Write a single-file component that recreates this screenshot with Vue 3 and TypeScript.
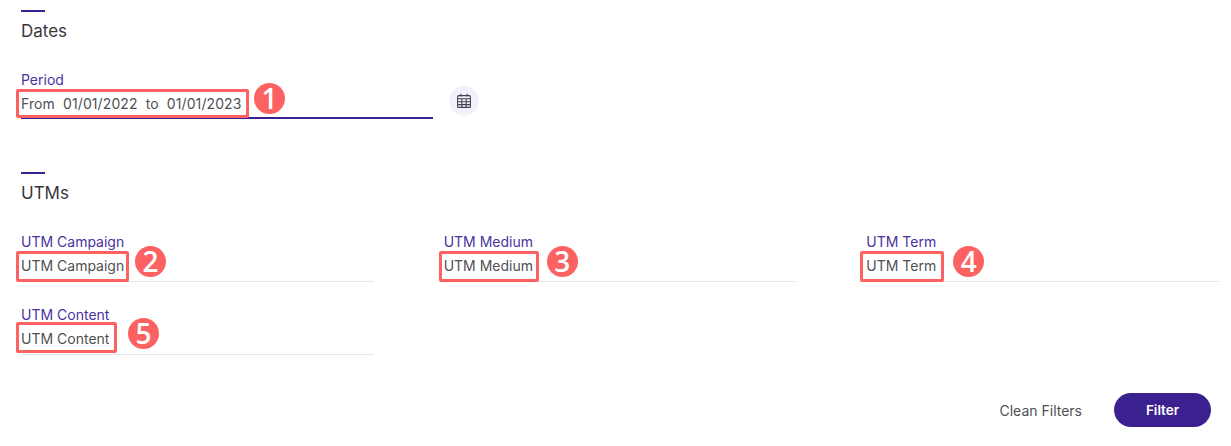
<script setup lang="ts">
interface Field {
  label: string
  markLeft: number
  markWidth: number
  markTop: number
  badgeLeft: number
  badgeTop: number
}
const fields: Field[] = [
  { label: 'UTM Campaign', markLeft: -5, markWidth: 113, markTop: 19, badgeLeft: 114, badgeTop: 14 },
  { label: 'UTM Medium', markLeft: -5, markWidth: 100, markTop: 19, badgeLeft: 103, badgeTop: 14 },
  { label: 'UTM Term', markLeft: -6, markWidth: 84, markTop: 19, badgeLeft: 87, badgeTop: 14 },
  { label: 'UTM Content', markLeft: -5, markWidth: 101, markTop: 17, badgeLeft: 107, badgeTop: 13 },
]
const nums = ['2', '3', '4', '5']
</script>

<template>
  <div class="page">
    <section class="dates">
      <span class="bar"></span>
      <h2>Dates</h2>
      <div class="period-row">
        <div class="period">
          <label>Period</label>
          <div class="value range">From&nbsp; 01/01/2022&nbsp; to&nbsp; 01/01/2023</div>
          <span class="mark" style="left: -5px; top: 19px; width: 233px"></span>
          <span class="badge" style="left: 233px; top: 13px">1</span>
        </div>
        <button class="cal" aria-label="Open calendar">
          <svg width="16" height="16" viewBox="0 0 16 16" fill="none" stroke="#45434f" stroke-width="1.1">
            <rect x="1.6" y="2.6" width="12.8" height="11.8" rx="1" />
            <path d="M1.6 5.8h12.8M1.6 8.8h12.8M1.6 11.6h12.8M5.8 5.8v8.6M10.2 5.8v8.6M4.8 .8v2.6M11.2 .8v2.6" />
          </svg>
        </button>
      </div>
    </section>

    <section class="utms">
      <span class="bar"></span>
      <h2>UTMs</h2>
      <div class="grid">
        <div v-for="(f, i) in fields" :key="f.label" class="field">
          <label>{{ f.label }}</label>
          <div class="value">{{ f.label }}</div>
          <span class="mark" :style="{ left: f.markLeft + 'px', top: f.markTop + 'px', width: f.markWidth + 'px' }"></span>
          <span class="badge" :style="{ left: f.badgeLeft + 'px', top: f.badgeTop + 'px' }">{{ nums[i] }}</span>
        </div>
      </div>
    </section>

    <footer class="actions">
      <button class="clean">Clean Filters</button>
      <button class="filter">Filter</button>
    </footer>
  </div>
</template>

<style>
html, body { margin: 0; background: #fff; }
</style>

<style scoped>
.page {
  width: 1231px;
  height: 446px;
  box-sizing: border-box;
  padding: 10px 12px 0 21px;
  font-family: Inter, "Liberation Sans", sans-serif;
  overflow: hidden;
  display: flex;
  flex-direction: column;
}
.bar {
  display: block;
  width: 24px;
  height: 2px;
  background: #3b2190;
}
h2 {
  margin: 9px 0 0;
  font-family: Inter, sans-serif;
  font-size: 17px;
  line-height: 20px;
  font-weight: 400;
  color: #38383c;
}
.period-row {
  display: flex;
  align-items: flex-start;
  margin-top: 29px;
}
.period, .field {
  position: relative;
  height: 50px;
  box-sizing: border-box;
  border-bottom: 1px solid #e6e6ea;
}
.period {
  width: 412px;
  height: 49px;
  border-bottom: 2px solid #3b2190;
}
label {
  display: block;
  font-size: 14px;
  line-height: 20px;
  color: #4a32a0;
}
.value {
  margin-top: 4px;
  font-size: 14px;
  line-height: 20px;
  color: #505054;
  white-space: nowrap;
}
.range { letter-spacing: 0.1px; }
.mark {
  position: absolute;
  height: 31px;
  box-sizing: border-box;
  border: 3px solid #fc6262;
  border-radius: 2px;
}
.period .mark { height: 29px; }
.badge {
  position: absolute;
  width: 31px;
  height: 31px;
  border-radius: 50%;
  background: #fc6262;
  color: #fff;
  font-family: "Open Sans", Inter, sans-serif;
  font-size: 28px;
  font-weight: 600;
  line-height: 31px;
  text-align: center;
}
.cal {
  width: 30px;
  height: 30px;
  margin: 16px 0 0 16px;
  padding: 0;
  border: 0;
  border-radius: 50%;
  background: #f3f1fc;
  display: flex;
  align-items: center;
  justify-content: center;
}
.utms { margin-top: 53px; }
.grid {
  display: grid;
  grid-template-columns: repeat(3, 1fr);
  column-gap: 70px;
  row-gap: 23px;
  margin-top: 29px;
}
.actions {
  display: flex;
  justify-content: flex-end;
  align-items: center;
  gap: 32px;
  margin-top: 38px;
  padding-right: 8px;
}
button { font-family: inherit; }
.clean {
  border: 0;
  background: none;
  padding: 0;
  font-size: 14px;
  color: #505054;
}
.filter {
  width: 97px;
  height: 34px;
  border: 0;
  border-radius: 17px;
  background: #3b2190;
  color: #fff;
  font-size: 13.5px;
  font-weight: 600;
}
</style>
